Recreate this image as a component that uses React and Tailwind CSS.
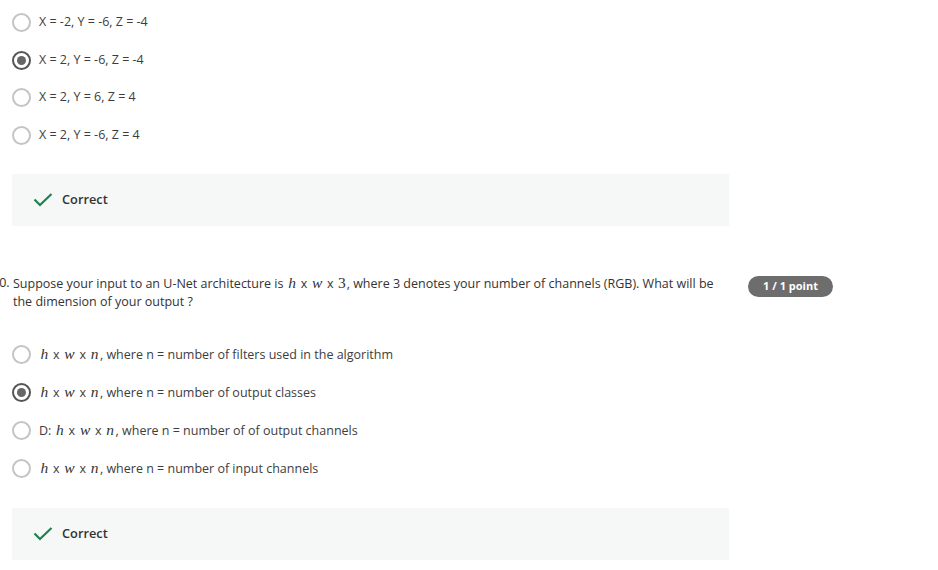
import React from 'react';

const font = { fontFamily: '"Open Sans", "Liberation Sans", sans-serif' };

const M = ({ children }) => (
	<span className="italic text-[15.5px] text-[#333] mx-[1.5px]" style={{ fontFamily: '"Liberation Serif", serif' }}>{children}</span>
);
const N = ({ children }) => (
	<span className="text-[15.5px] text-[#333] mx-[1px]" style={{ fontFamily: '"Liberation Serif", serif' }}>{children}</span>
);

const Radio = ({ checked }) => (
	checked ? (
		<span className="w-[19px] h-[19px] rounded-full border-2 border-[#555] flex items-center justify-center shrink-0">
			<span className="w-[9px] h-[9px] rounded-full bg-[#666]" />
		</span>
	) : (
		<span className="w-[19px] h-[19px] rounded-full border-2 border-[#c4c4c4] shrink-0" />
	)
);

const Option = ({ checked, h, children }) => (
	<div className={`flex items-center gap-[8px] ${h}`}>
		<Radio checked={checked} />
		<span className="text-[12.5px] text-[#3d3d3d]">{children}</span>
	</div>
);

const Correct = () => (
	<div className="w-[717px] h-[52px] bg-[#f5f8f7] flex items-center pl-[21px] gap-[9px]">
		<svg width="20" height="14" viewBox="0 0 20 14">
			<polyline points="1.5,6.5 7,12 18.5,1" fill="none" stroke="#1e8150" strokeWidth="2.2" />
		</svg>
		<span className="text-[12.8px] font-semibold text-[#333]">Correct</span>
	</div>
);

const hxw = (last) => (
	<>
		<M>h</M> x <M>w</M> x <M>{last}</M>
	</>
);

export default function App() {
	return (
		<div className="w-[938px] h-[570px] bg-white overflow-hidden pl-[12px]" style={font}>
			<div className="pt-[4px]">
				<Option h="h-[37.5px]">X = -2, Y = -6, Z = -4</Option>
				<Option h="h-[37.5px]" checked>X = 2, Y = -6, Z = -4</Option>
				<Option h="h-[37.5px]">X = 2, Y = 6, Z = 4</Option>
				<Option h="h-[37.5px]">X = 2, Y = -6, Z = 4</Option>
			</div>
			<div className="mt-[20px]">
				<Correct />
			</div>

			<div className="mt-[48px] flex items-start">
				<div className="w-[717px] flex text-[12.5px] leading-[18px] text-[#333]">
					<span className="-ml-[20px] w-[21px] shrink-0">10.</span>
					<p className="pr-[8px]">
						Suppose your input to an U-Net architecture is <M>h</M> x <M>w</M> x <N>3</N>, where 3 denotes your number of channels (RGB). What will be the dimension of your output ?
					</p>
				</div>
				<span className="ml-[19px] mt-[2px] w-[85px] h-[21px] rounded-full bg-[#6d6d6d] text-white text-[11px] font-bold flex items-center justify-center">
					1 / 1 point
				</span>
			</div>

			<div className="mt-[24px]">
				<Option h="h-[38px]">{hxw('n')}, where n = number of filters used in the algorithm</Option>
				<Option h="h-[38px]" checked>{hxw('n')}, where n = number of output classes</Option>
				<Option h="h-[38px]">D: {hxw('n')}, where n = number of of output channels</Option>
				<Option h="h-[38px]">{hxw('n')}, where n = number of input channels</Option>
			</div>
			<div className="mt-[21px]">
				<Correct />
			</div>
		</div>
	);
}
